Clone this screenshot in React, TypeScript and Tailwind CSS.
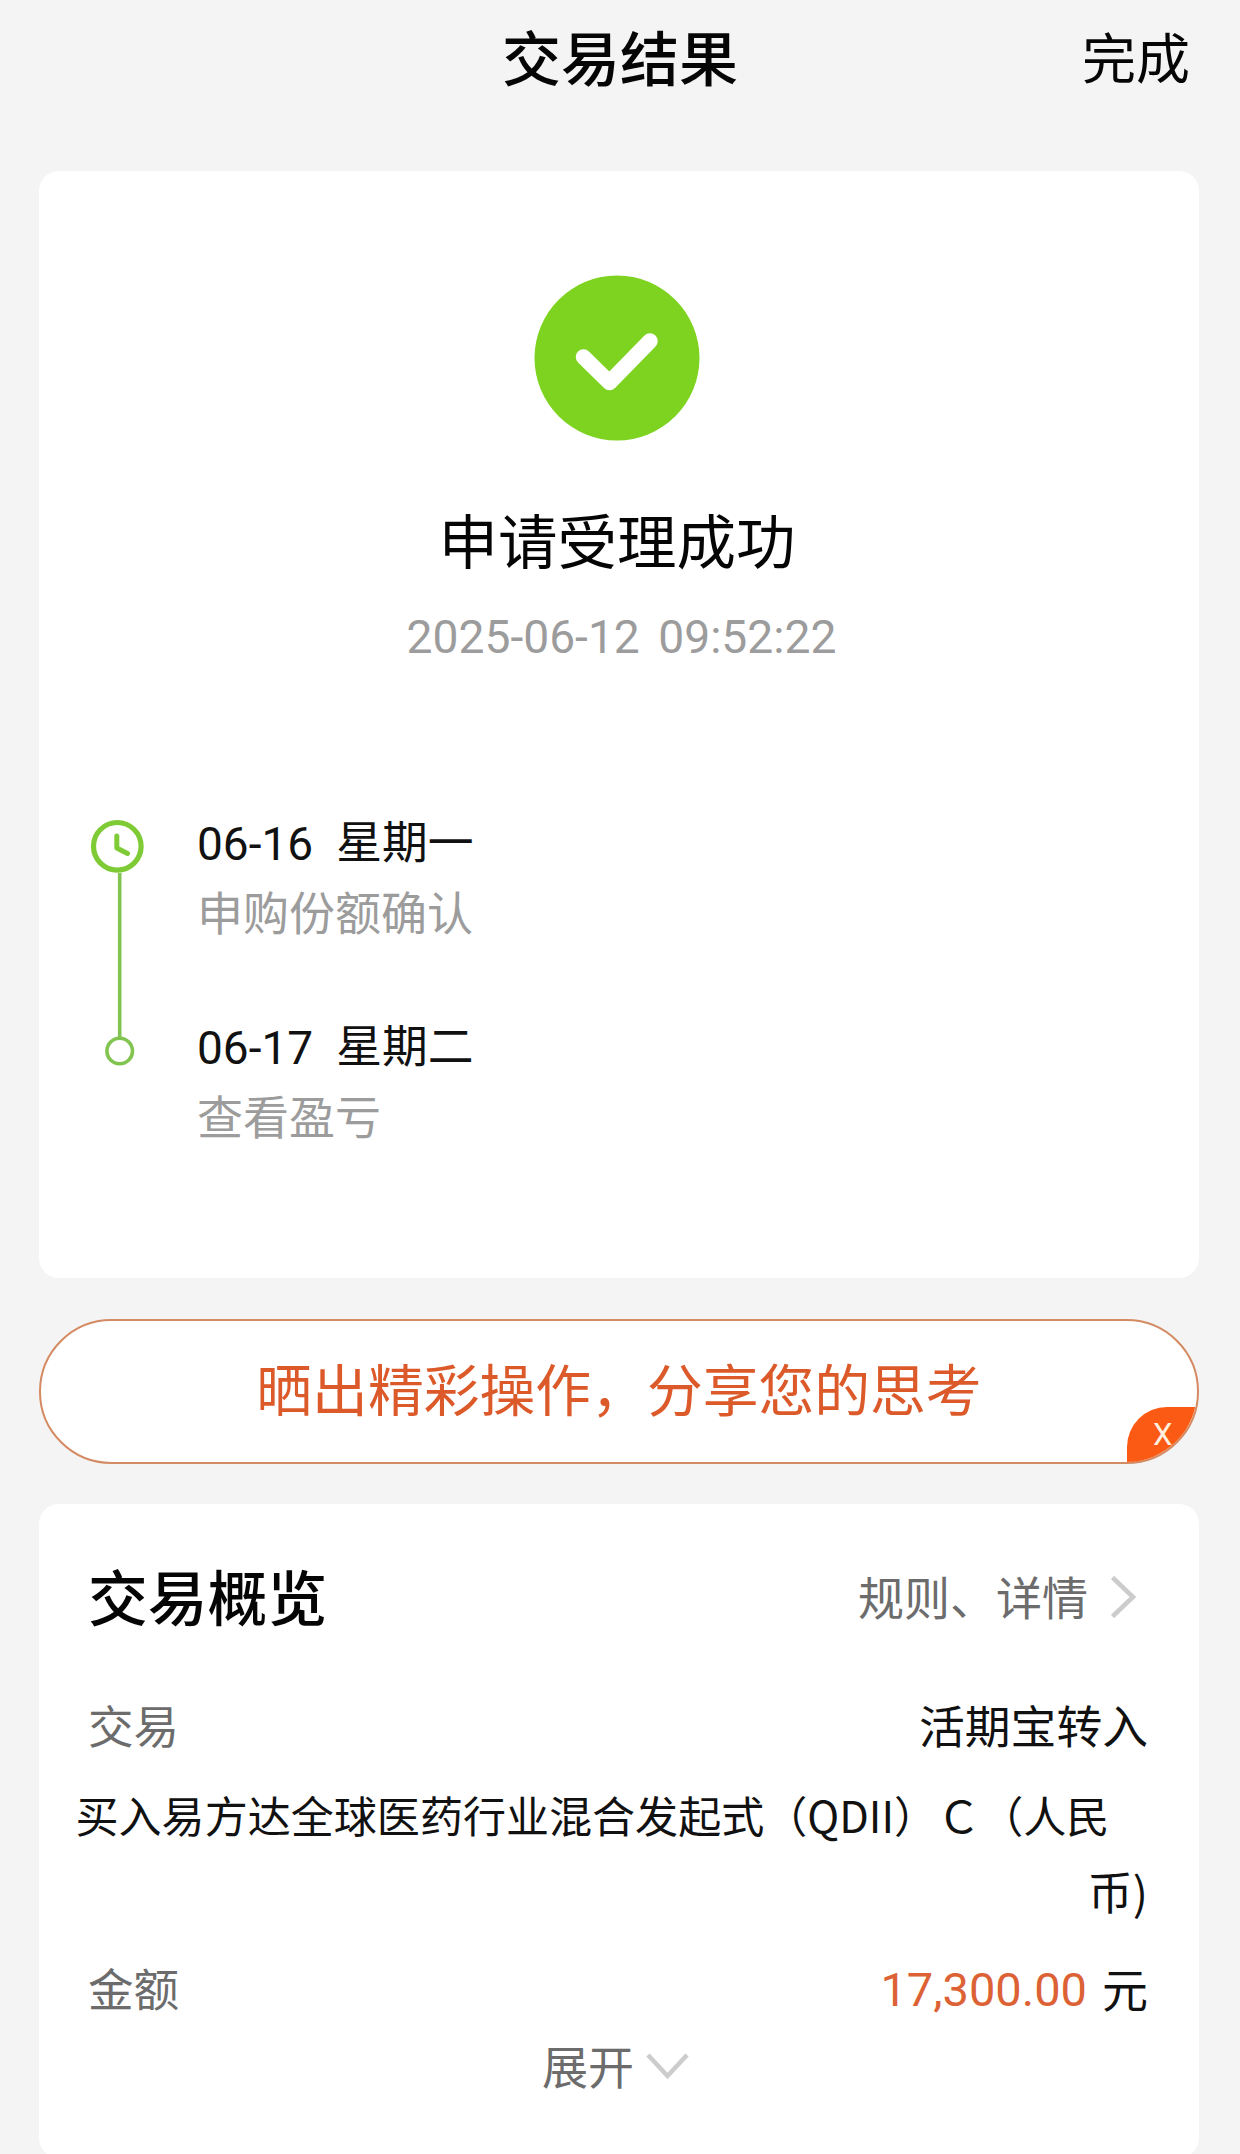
import type { ReactNode } from 'react';

const cjk = "font-['Noto_Sans_CJK_SC',sans-serif]";
const latin = "font-['Roboto','Noto_Sans_CJK_SC',sans-serif]";

function Header() {
  return (
    <header className="grid h-[171px] grid-cols-[1fr_auto_1fr] items-start pt-[26px]">
      <span />
      <h1 className="text-[59px] leading-[60px] font-medium">交易结果</h1>
      <button className="mr-[50px] justify-self-end text-[54px] leading-[60px]">完成</button>
    </header>
  );
}

function SuccessMark() {
  return (
    <svg className="mt-[104px] mr-[4px] h-[166px] w-[166px] self-center" viewBox="0 0 166 166" fill="none">
      <circle cx="83" cy="83" r="82.5" fill="#7ed321" />
      <path d="M49.5 82 L75.5 107.5 L116 66" stroke="#fff" strokeWidth="15.5" strokeLinecap="round" strokeLinejoin="round" />
    </svg>
  );
}

function TimelineRail() {
  return (
    <svg className="mt-[3px] h-[254px] w-[60px] shrink-0" viewBox="0 0 60 254" fill="none">
      <path d="M31.7 56 V220" stroke="#82c450" strokeWidth="3.6" />
      <circle cx="29.3" cy="29.3" r="23.8" stroke="#7fcb35" strokeWidth="5.2" />
      <path d="M28.8 19 V31 L39.5 36.5" stroke="#7fcb35" strokeWidth="5" strokeLinecap="round" strokeLinejoin="round" />
      <circle cx="31.7" cy="234" r="12.8" stroke="#82c450" strokeWidth="3.6" />
    </svg>
  );
}

function Step({ date, day, note }: { date: string; day: string; note: string }) {
  return (
    <li>
      <p className={`${latin} flex gap-[23px] text-[46px] leading-[60px] text-[#111]`}>
        <span>{date}</span>
        <span className="text-[45.8px]">{day}</span>
      </p>
      <p className="mt-[6px] pt-px text-[46px] leading-[59px] text-[#9c9c9c]">{note}</p>
    </li>
  );
}

function ResultCard() {
  return (
    <section className="flex h-[1107px] flex-col rounded-[20px] bg-white">
      <SuccessMark />
      <h2 className="mt-[62px] mr-[4px] text-center text-[59.5px] leading-[70px]">申请受理成功</h2>
      <p className={`${latin} mt-[34px] ml-[5px] text-center text-[46.2px] leading-[60px] text-[#9c9c9c] [word-spacing:7px]`}>
        2025-06-12 09:52:22
      </p>
      <div className="mt-[147px] ml-[49px] flex">
        <TimelineRail />
        <ol className="ml-[49px] flex flex-col gap-[78px]">
          <Step date="06-16" day="星期一" note="申购份额确认" />
          <Step date="06-17" day="星期二" note="查看盈亏" />
        </ol>
      </div>
    </section>
  );
}

function ShareBanner() {
  return (
    <section className="relative mt-[41px] flex h-[145px] items-center justify-center overflow-hidden rounded-full border-2 border-[#d48a62] bg-white">
      <span className="-mt-[9px] text-[55.8px] leading-[70px] text-[#dc5a2a]">晒出精彩操作，分享您的思考</span>
      <button
        className={`${latin} absolute right-0 bottom-0 flex h-[55px] w-[70px] rounded-tl-[40px] bg-[#fb5a14] pt-[12px] pl-[26px] text-[31px] leading-[32px] text-[#fff0e0]`}
      >
        X
      </button>
    </section>
  );
}

function Row({ label, children }: { label: string; children: ReactNode }) {
  return (
    <div className="flex justify-between pr-[51px] pl-[49px] text-[46px] leading-[60px]">
      <span className="text-[45.6px] text-[#6c6c6c]">{label}</span>
      {children}
    </div>
  );
}

function OverviewCard() {
  return (
    <section className="mt-[40px] flex h-[654px] flex-col rounded-[20px] bg-white pt-[56px]">
      <div className="flex items-center pr-[61px] pl-[49px]">
        <h2 className="text-[59.8px] leading-[70px] font-medium">交易概览</h2>
        <span className="ml-auto pt-px text-[46px] leading-[69px] text-[#6c6c6c]">规则、详情</span>
        <svg className="mt-[2px] ml-[20px] h-[46px] w-[30px]" viewBox="0 0 30 46" fill="none">
          <path d="M4.5 4.5 L25 24 L4.5 43.5" stroke="#ccc" strokeWidth="4.5" />
        </svg>
      </div>
      <div className="mt-[64px]">
        <Row label="交易">
          <span className="text-[45.8px] text-[#111]">活期宝转入</span>
        </Row>
      </div>
      <p className="mt-[30px] ml-[36.5px] text-[43.05px] leading-[60px] whitespace-nowrap text-[#111]">
        买入易方达全球医药行业混合发起式（QDII）Ｃ（人民
      </p>
      <p className="mt-[17px] mr-[51px] text-right text-[45px] leading-[60px] text-[#111]">币)</p>
      <div className="mt-[36px]">
        <Row label="金额">
          <span className="flex gap-[15px] text-[#111]">
            <span className={`${latin} pt-[3px] text-[47px] leading-[60px] text-[#dc6236]`}>17,300.00</span>
            <span>元</span>
          </span>
        </Row>
      </div>
      <button className="mt-[14px] ml-[503px] flex items-center text-[46px] leading-[60px] text-[#6c6c6c]">
        展开
        <svg className="mt-[4px] ml-[11px] h-[30px] w-[44px]" viewBox="0 0 44 30" fill="none">
          <path d="M3 4 L22.5 25 L42 4" stroke="#ccc" strokeWidth="4.5" />
        </svg>
      </button>
    </section>
  );
}

export default function App() {
  return (
    <main lang="zh-CN" className={`${cjk} h-[2154px] w-[1240px] overflow-hidden bg-[#f4f4f4] text-[#050505]`}>
      <Header />
      <div className="mr-[41px] ml-[39px]">
        <ResultCard />
        <ShareBanner />
        <OverviewCard />
      </div>
    </main>
  );
}
